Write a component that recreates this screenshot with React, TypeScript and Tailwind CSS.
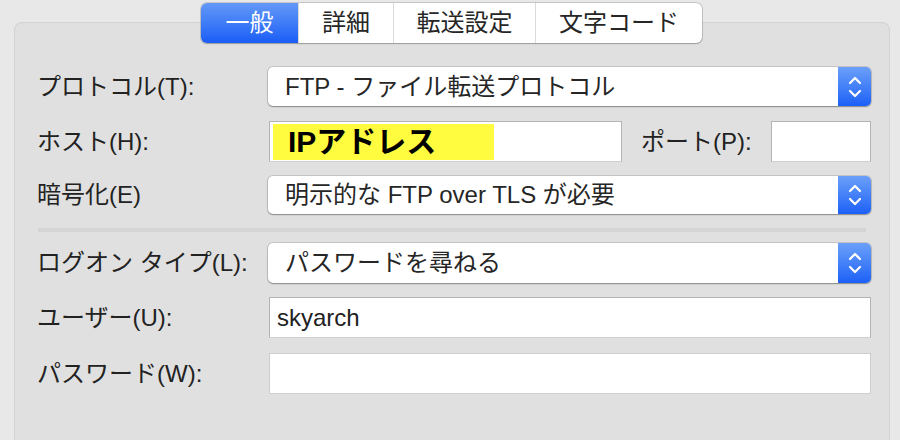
import React from 'react';

const font = { fontFamily: '"Liberation Sans", "Noto Sans CJK JP", sans-serif' };

function Chevrons() {
    return (
        <svg width="16" height="26" viewBox="0 0 16 26" fill="none" stroke="white" strokeWidth="2.2" strokeLinecap="round" strokeLinejoin="round">
            <path d="M3 9 L8 4 L13 9" />
            <path d="M3 17 L8 22 L13 17" />
        </svg>
    );
}

function Select({ value, height }: { value: string; height: string }) {
    return (
        <div className={`flex w-full ${height} rounded-[5px] bg-white shadow-[0_0_0_1px_rgba(0,0,0,0.12),0_1px_1.5px_rgba(0,0,0,0.3)]`}>
            <div className="flex flex-1 items-center pl-[17px] text-[24px] text-[#262626]">{value}</div>
            <div className="flex w-[33px] items-center justify-center rounded-r-[5px] bg-gradient-to-b from-[#6b9ff8] to-[#1c5ff7]">
                <Chevrons />
            </div>
        </div>
    );
}

function Input({ children, className = '' }: { children?: React.ReactNode; className?: string }) {
    return (
        <div className={`flex h-[41px] items-center border border-[#b4b4b4] border-b-[#cfcfcf] bg-white ${className}`}>
            {children}
        </div>
    );
}

const tabs = ['一般', '詳細', '転送設定', '文字コード'];
const tabWidths = ['w-[97px]', 'w-[95px]', 'w-[142px]', 'w-[167px]'];

export default function App() {
    return (
        <div className="flex h-[440px] w-[900px] flex-col overflow-hidden bg-[#e8e8e8] text-[#222]" style={font}>
            <div className="relative z-10 flex pl-[201px] pt-[3px]">
                <div className="flex h-[40px] overflow-hidden rounded-[6px] bg-white shadow-[0_0_0_1px_rgba(0,0,0,0.14),0_1px_1.5px_rgba(0,0,0,0.2)]">
                    {tabs.map((t, i) => (
                        <div
                            key={t}
                            className={`flex items-center justify-center text-[24px] ${tabWidths[i]} ${i === 0
                                ? 'bg-gradient-to-b from-[#6398f7] to-[#1a5cf6] text-white'
                                : 'border-l border-[#d9d9d9] text-[#262626]'
                                }`}
                        >
                            {t}
                        </div>
                    ))}
                </div>
            </div>

            <div className="-mt-[21px] ml-[14px] w-[876px] flex-1 rounded-t-[8px] border border-[#d2d2d2] border-b-0 bg-[#e0e0e0] pl-[22px] pr-[18px] pt-[44px]">
                <div className="flex h-[39px] items-center">
                    <div className="w-[231px] text-[24px]">プロトコル(T):</div>
                    <div className="flex-1">
                        <Select value="FTP - ファイル転送プロトコル" height="h-[39px]" />
                    </div>
                </div>

                <div className="mt-[15px] flex h-[41px] items-center">
                    <div className="w-[232px] text-[24px]">ホスト(H):</div>
                    <Input className="w-[353px] pl-[3px]">
                        <div className="flex h-[36px] w-[221px] items-center bg-[#fffb3f] pl-[15px] text-[30px] font-bold text-black">
                            IPアドレス
                        </div>
                    </Input>
                    <div className="ml-[19px] w-[130px] text-[24px]">ポート(P):</div>
                    <Input className="w-[100px]" />
                </div>

                <div className="mt-[14px] flex h-[38px] items-center">
                    <div className="w-[231px] text-[24px]">暗号化(E)</div>
                    <div className="flex-1">
                        <Select value="明示的な FTP over TLS が必要" height="h-[38px]" />
                    </div>
                </div>

                <div className="ml-[1px] mr-[5px] mt-[14px] h-[4px] bg-[#d5d5d5]" />

                <div className="mt-[11px] flex h-[40px] items-center">
                    <div className="w-[231px] text-[24px]">ログオン タイプ(L):</div>
                    <div className="flex-1">
                        <Select value="パスワードを尋ねる" height="h-[40px]" />
                    </div>
                </div>

                <div className="mt-[14px] flex h-[41px] items-center">
                    <div className="w-[232px] text-[24px]">ユーザー(U):</div>
                    <Input className="flex-1 pl-[7px] text-[24px]">skyarch</Input>
                </div>

                <div className="mt-[15px] flex h-[41px] items-center">
                    <div className="w-[232px] text-[24px]">パスワード(W):</div>
                    <Input className="flex-1 border-[#cdcdcd]" />
                </div>
            </div>
        </div>
    );
}
